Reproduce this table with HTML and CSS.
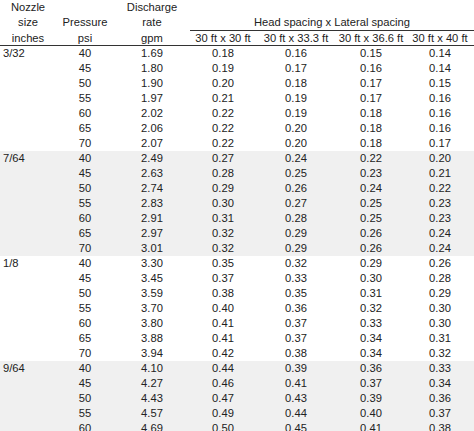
FILE: index.html
```html
<!DOCTYPE html>
<html lang="en">
<head>
  <meta charset="UTF-8" />
  <title>Nozzle discharge and precipitation rates</title>
  <link rel="stylesheet" href="styles.css">
</head>
<body>

  <table class="rate-table">
    <colgroup>
      <col class="col-size" />
      <col class="col-psi" />
      <col class="col-gpm" />
      <col class="col-a" />
      <col class="col-b" />
      <col class="col-c" />
      <col class="col-d" />
    </colgroup>
    <thead>
      <tr>
        <th>Nozzle</th>
        <th></th>
        <th>Discharge</th>
        <th colspan="4"></th>
      </tr>
      <tr>
        <th>size</th>
        <th>Pressure</th>
        <th>rate</th>
        <th colspan="4" class="span-head">Head spacing x Lateral spacing</th>
      </tr>
      <tr class="units">
        <th>inches</th>
        <th>psi</th>
        <th>gpm</th>
        <th>30 ft x 30 ft</th>
        <th>30 ft x 33.3 ft</th>
        <th>30 ft x 36.6 ft</th>
        <th>30 ft x 40 ft</th>
      </tr>
    </thead>

    <!-- 3/32 -->
    <tbody>
      <tr><td class="size">3/32</td><td>40</td><td>1.69</td><td>0.18</td><td>0.16</td><td>0.15</td><td>0.14</td></tr>
      <tr><td></td><td>45</td><td>1.80</td><td>0.19</td><td>0.17</td><td>0.16</td><td>0.14</td></tr>
      <tr><td></td><td>50</td><td>1.90</td><td>0.20</td><td>0.18</td><td>0.17</td><td>0.15</td></tr>
      <tr><td></td><td>55</td><td>1.97</td><td>0.21</td><td>0.19</td><td>0.17</td><td>0.16</td></tr>
      <tr><td></td><td>60</td><td>2.02</td><td>0.22</td><td>0.19</td><td>0.18</td><td>0.16</td></tr>
      <tr><td></td><td>65</td><td>2.06</td><td>0.22</td><td>0.20</td><td>0.18</td><td>0.16</td></tr>
      <tr><td></td><td>70</td><td>2.07</td><td>0.22</td><td>0.20</td><td>0.18</td><td>0.17</td></tr>
    </tbody>

    <!-- 7/64 -->
    <tbody class="shaded">
      <tr><td class="size">7/64</td><td>40</td><td>2.49</td><td>0.27</td><td>0.24</td><td>0.22</td><td>0.20</td></tr>
      <tr><td></td><td>45</td><td>2.63</td><td>0.28</td><td>0.25</td><td>0.23</td><td>0.21</td></tr>
      <tr><td></td><td>50</td><td>2.74</td><td>0.29</td><td>0.26</td><td>0.24</td><td>0.22</td></tr>
      <tr><td></td><td>55</td><td>2.83</td><td>0.30</td><td>0.27</td><td>0.25</td><td>0.23</td></tr>
      <tr><td></td><td>60</td><td>2.91</td><td>0.31</td><td>0.28</td><td>0.25</td><td>0.23</td></tr>
      <tr><td></td><td>65</td><td>2.97</td><td>0.32</td><td>0.29</td><td>0.26</td><td>0.24</td></tr>
      <tr><td></td><td>70</td><td>3.01</td><td>0.32</td><td>0.29</td><td>0.26</td><td>0.24</td></tr>
    </tbody>

    <!-- 1/8 -->
    <tbody>
      <tr><td class="size">1/8</td><td>40</td><td>3.30</td><td>0.35</td><td>0.32</td><td>0.29</td><td>0.26</td></tr>
      <tr><td></td><td>45</td><td>3.45</td><td>0.37</td><td>0.33</td><td>0.30</td><td>0.28</td></tr>
      <tr><td></td><td>50</td><td>3.59</td><td>0.38</td><td>0.35</td><td>0.31</td><td>0.29</td></tr>
      <tr><td></td><td>55</td><td>3.70</td><td>0.40</td><td>0.36</td><td>0.32</td><td>0.30</td></tr>
      <tr><td></td><td>60</td><td>3.80</td><td>0.41</td><td>0.37</td><td>0.33</td><td>0.30</td></tr>
      <tr><td></td><td>65</td><td>3.88</td><td>0.41</td><td>0.37</td><td>0.34</td><td>0.31</td></tr>
      <tr><td></td><td>70</td><td>3.94</td><td>0.42</td><td>0.38</td><td>0.34</td><td>0.32</td></tr>
    </tbody>

    <!-- 9/64 -->
    <tbody class="shaded">
      <tr><td class="size">9/64</td><td>40</td><td>4.10</td><td>0.44</td><td>0.39</td><td>0.36</td><td>0.33</td></tr>
      <tr><td></td><td>45</td><td>4.27</td><td>0.46</td><td>0.41</td><td>0.37</td><td>0.34</td></tr>
      <tr><td></td><td>50</td><td>4.43</td><td>0.47</td><td>0.43</td><td>0.39</td><td>0.36</td></tr>
      <tr><td></td><td>55</td><td>4.57</td><td>0.49</td><td>0.44</td><td>0.40</td><td>0.37</td></tr>
      <tr><td></td><td>60</td><td>4.69</td><td>0.50</td><td>0.45</td><td>0.41</td><td>0.38</td></tr>
    </tbody>
  </table>

</body>
</html>
```

FILE: styles.css
```css
* {
  box-sizing: border-box;
}

body {
  margin: 0;
  background: #ffffff;
  color: #222;
  font-family: 'Liberation Sans', Arial, sans-serif;
  font-size: 11.2px;
}

.rate-table {
  width: 474px;
  border-collapse: collapse;
  table-layout: fixed;
}

.col-size { width: 56px; }
.col-psi  { width: 58px; }
.col-gpm  { width: 76px; }
.col-a    { width: 66px; }
.col-b    { width: 80px; }
.col-c    { width: 70px; }
.col-d    { width: 68px; }

th, td {
  padding: 0;
  height: 15px;
  line-height: 15px;
  text-align: center;
  white-space: nowrap;
  font-weight: normal;
}

.span-head {
  border-bottom: 1px solid #333;
}

.units th {
  height: 14px;
  line-height: 14px;
  border-bottom: 1px solid #333;
}

td.size {
  text-align: left;
  padding-left: 3px;
}

.shaded td {
  background-color: #f0f0f0;
}
```
